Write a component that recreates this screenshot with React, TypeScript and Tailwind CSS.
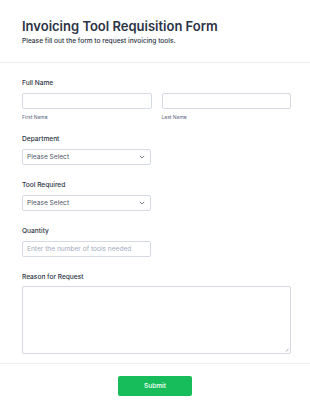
import React from "react";

const font = { fontFamily: "Inter, 'Noto Sans', sans-serif" };

function Chevron() {
  return (
    <svg width="6" height="4" viewBox="0 0 6 4" className="shrink-0">
      <path d="M0.8 0.8 L3 3 L5.2 0.8" fill="none" stroke="#6b7280" strokeWidth="0.9" />
    </svg>
  );
}

function Label({ children }: { children: React.ReactNode }) {
  return <div className="text-[6.6px] leading-[10px] font-medium text-[#2c3345]">{children}</div>;
}

function Select() {
  return (
    <div className="mt-[5px] w-[129px] h-[16px] border border-[#d5d9e2] rounded-[2px] bg-white flex items-center justify-between pl-[4px] pr-[5px]">
      <span className="text-[6.6px] leading-[10px] text-[#4f5666]">Please Select</span>
      <Chevron />
    </div>
  );
}

export default function App() {
  return (
    <div className="w-[310px] h-[411px] bg-white overflow-hidden" style={font}>
      <div className="px-[22px] pt-[18px] pb-[16px] border-b border-[#eceef2]">
        <h1 className="text-[13px] leading-[17px] font-semibold text-[#2c3345]">
          Invoicing Tool Requisition Form
        </h1>
        <p className="mt-[1px] text-[6.6px] leading-[10px] font-medium text-[#2c3345]">
          Please fill out the form to request invoicing tools.
        </p>
      </div>

      <div className="pl-[22px] pr-[19px] pt-[15px] pb-[9px] border-b border-[#eceef2]">
        <Label>Full Name</Label>
        <div className="mt-[5px] flex gap-[10px]">
          <div className="flex-1">
            <div className="h-[16px] border border-[#d5d9e2] rounded-[2px]" />
            <div className="mt-[5px] text-[5px] leading-[7px] text-[#57647e]">First Name</div>
          </div>
          <div className="flex-1">
            <div className="h-[16px] border border-[#d5d9e2] rounded-[2px]" />
            <div className="mt-[5px] text-[5px] leading-[7px] text-[#57647e]">Last Name</div>
          </div>
        </div>

        <div className="mt-[13px]">
          <Label>Department</Label>
          <Select />
        </div>

        <div className="mt-[15px]">
          <Label>Tool Required</Label>
          <Select />
        </div>

        <div className="mt-[15px]">
          <Label>Quantity</Label>
          <div className="mt-[5px] w-[129px] h-[16px] border border-[#d5d9e2] rounded-[2px] flex items-center pl-[4px]">
            <span className="text-[6.6px] leading-[10px] text-[#a3abbb]">Enter the number of tools needed</span>
          </div>
        </div>

        <div className="mt-[15px]">
          <Label>Reason for Request</Label>
          <div className="relative mt-[4px] h-[68px] border border-[#d5d9e2] rounded-[2px]">
            <svg width="4" height="4" viewBox="0 0 4 4" className="absolute right-[1px] bottom-[1px]">
              <path d="M3.5 0.5 L0.5 3.5 M3.5 2 L2 3.5" stroke="#9ca3af" strokeWidth="0.6" />
            </svg>
          </div>
        </div>
      </div>

      <div className="flex justify-center pt-[12px]">
        <div className="w-[74px] h-[20px] rounded-[2px] bg-[#18bd5b] flex items-center justify-center">
          <span className="text-[6.6px] leading-[10px] font-medium text-white">Submit</span>
        </div>
      </div>
    </div>
  );
}
